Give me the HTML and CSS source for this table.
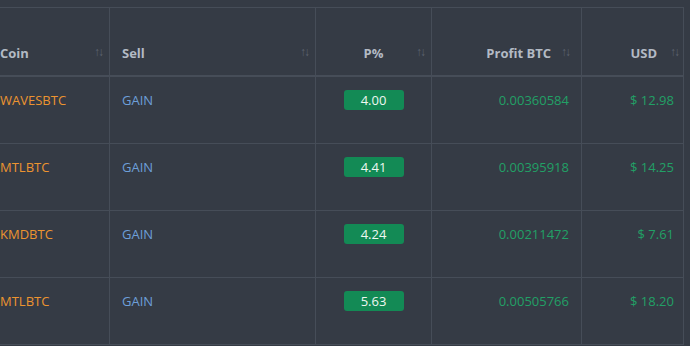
FILE: index.html
```html
<!DOCTYPE html>
<html>
<head>
<meta charset="utf-8">
<link rel="stylesheet" href="styles.css">
</head>
<body>
<div class="wrap">
<table class="trades">
  <thead>
    <tr>
      <th class="c-coin">Coin<span class="sort">↑↓</span></th>
      <th class="c-sell">Sell<span class="sort">↑↓</span></th>
      <th class="c-pct">P%<span class="sort">↑↓</span></th>
      <th class="c-btc">Profit BTC<span class="sort">↑↓</span></th>
      <th class="c-usd">USD<span class="sort">↑↓</span></th>
    </tr>
  </thead>
  <tbody>
    <tr>
      <td class="c-coin coin">WAVESBTC</td>
      <td class="c-sell gain">GAIN</td>
      <td class="c-pct"><span class="badge">4.00</span></td>
      <td class="c-btc pos">0.00360584</td>
      <td class="c-usd pos">$ 12.98</td>
    </tr>
    <tr>
      <td class="c-coin coin">MTLBTC</td>
      <td class="c-sell gain">GAIN</td>
      <td class="c-pct"><span class="badge">4.41</span></td>
      <td class="c-btc pos">0.00395918</td>
      <td class="c-usd pos">$ 14.25</td>
    </tr>
    <tr>
      <td class="c-coin coin">KMDBTC</td>
      <td class="c-sell gain">GAIN</td>
      <td class="c-pct"><span class="badge">4.24</span></td>
      <td class="c-btc pos">0.00211472</td>
      <td class="c-usd pos">$ 7.61</td>
    </tr>
    <tr>
      <td class="c-coin coin">MTLBTC</td>
      <td class="c-sell gain">GAIN</td>
      <td class="c-pct"><span class="badge">5.63</span></td>
      <td class="c-btc pos">0.00505766</td>
      <td class="c-usd pos">$ 18.20</td>
    </tr>
  </tbody>
</table>
</div>
</body>
</html>
```

FILE: styles.css
```css
html, body {
  margin: 0;
  padding: 0;
  background: #353b45;
  overflow: hidden;
}
body {
  font-family: "Open Sans", "Liberation Sans", sans-serif;
  font-size: 13px;
  width: 690px;
  height: 346px;
}
.wrap {
  padding-top: 7px;
  margin-left: -12px;
}
.trades {
  border-collapse: separate;
  border-spacing: 0;
  table-layout: fixed;
  width: 696px;
  border-top: 1px solid #464d58;
}
.trades th,
.trades td {
  box-sizing: border-box;
  border-right: 1px solid #464d58;
  border-bottom: 1px solid #464d58;
  line-height: 18px;
  padding: 14px 12px 33px;
  vertical-align: top;
  text-align: left;
}
.trades th {
  position: relative;
  color: #b3bac4;
  font-weight: 700;
  padding: 36px 12px 13px;
  vertical-align: bottom;
  border-bottom: 2px solid #464d58;
}
.c-coin { width: 122px; }
.c-sell { width: 206px; }
.c-pct { width: 116px; text-align: center !important; }
.c-btc { width: 150px; text-align: right !important; }
.c-usd { width: 102px; text-align: right !important; padding-right: 9px !important; }
.trades th.c-btc { padding-right: 30px; }
.trades th.c-usd { padding-right: 26px !important; }
.sort {
  position: absolute;
  right: 7px;
  bottom: 14px;
  font-size: 12px;
  font-weight: 400;
  letter-spacing: -2px;
  color: #5d6470;
  line-height: 18px;
}
.c-btc .sort { right: 12px; }
.c-usd .sort { right: 5px; }
.coin { color: #ec9430; }
.gain { color: #6d9fd9; }
.pos { color: #22a066; }
.badge {
  display: inline-block;
  width: 60px;
  height: 20px;
  line-height: 20px;
  margin-top: -1px;
  border-radius: 3px;
  background: #138a55;
  color: #eef7f1;
  text-align: center;
}
```
